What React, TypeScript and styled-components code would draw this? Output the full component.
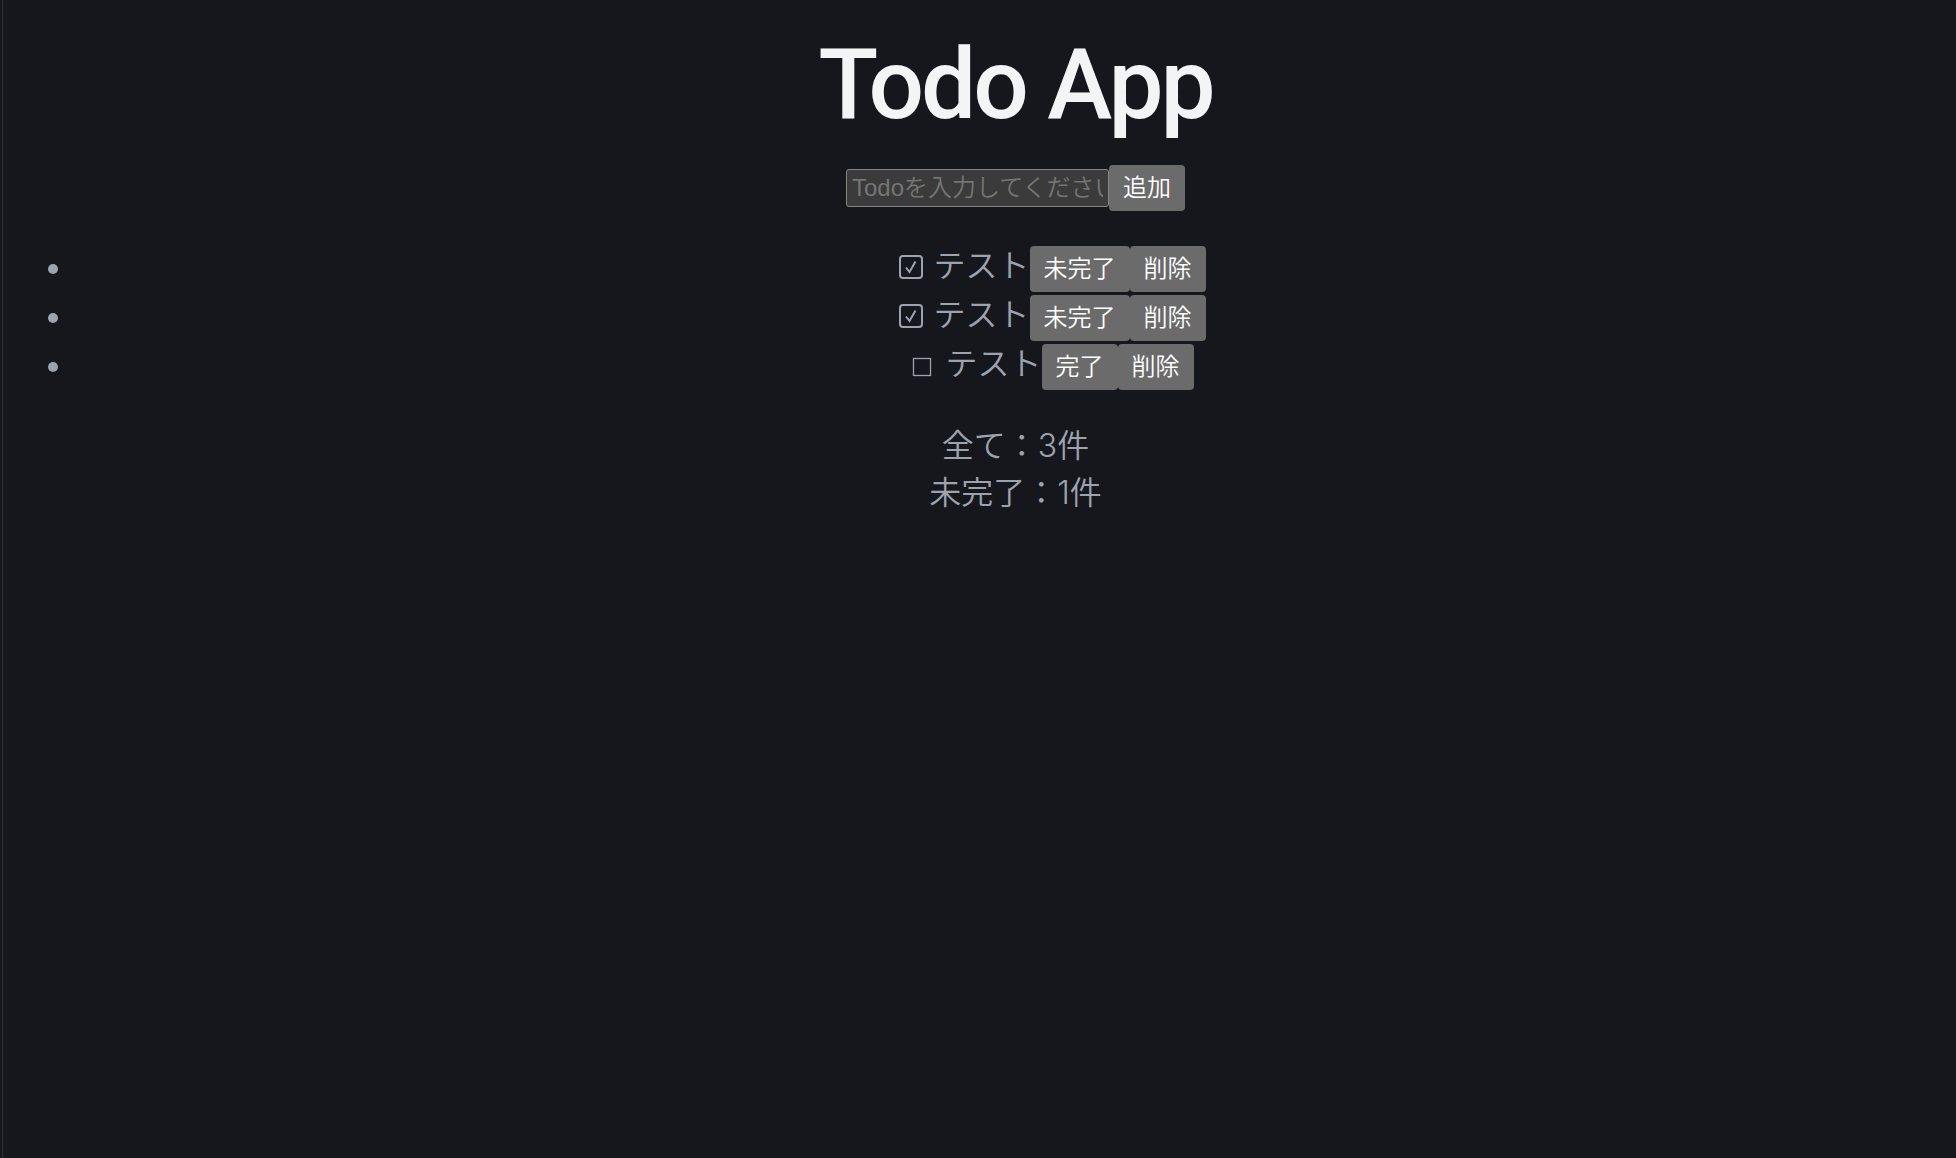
import { FormEvent, useState } from 'react';
import styled, { createGlobalStyle } from 'styled-components';

type Todo = {
  id: number;
  title: string;
  done: boolean;
};

const GlobalStyle = createGlobalStyle`
  * {
    box-sizing: border-box;
  }

  body {
    margin: 0;
    overflow-x: hidden;
    background: #16171d;
    color: #9ca3af;
    font: 350 32px/47px Inter, "Noto Sans CJK JP", sans-serif;
  }
`;

const Page = styled.main`
  width: calc(100% + 70px);
  min-height: 100vh;
  margin-left: 2px;
  border-left: 1px solid #2e303a;
  text-align: center;
`;

const Title = styled.h1`
  margin: 0;
  padding: 26px 0 22px;
  color: #f3f4f6;
  font-family: Roboto, sans-serif;
  font-size: 98px;
  font-weight: 500;
  line-height: 117px;
  letter-spacing: -3px;
`;

const Form = styled.form`
  display: flex;
  justify-content: center;
  align-items: center;
`;

const TextField = styled.input`
  width: 263px;
  height: 38px;
  padding: 0 5px;
  border: 1px solid #858585;
  border-radius: 3px;
  background: #3b3b3b;
  color: #fff;
  font: 350 24px "Liberation Sans", "Noto Sans CJK JP", sans-serif;

  &::placeholder {
    color: #757575;
    opacity: 1;
  }
`;

const Button = styled.button`
  height: 46px;
  padding: 0 14px;
  border: 0;
  border-radius: 4px;
  background: #6b6b6b;
  color: #fff;
  font: inherit;
  font-size: 24px;
  line-height: 46px;
`;

const List = styled.ul`
  display: grid;
  gap: 1px;
  margin: 34px 0 31px;
  padding: 0 0 0 45px;
  list-style: none;
`;

const Item = styled.li`
  display: flex;
  align-items: center;
  gap: 17px;
  height: 48px;

  &::before {
    content: '';
    width: 10px;
    height: 10px;
    border-radius: 50%;
    background: currentColor;
  }
`;

const Row = styled.div`
  display: flex;
  flex: 1;
  justify-content: center;
  align-items: flex-start;
`;

const CheckLabel = styled.label`
  display: flex;
  align-items: center;
  gap: 8px;
  line-height: 40px;
`;

const HiddenCheck = styled.input`
  position: absolute;
  opacity: 0;
`;

const CheckIcon = styled.svg`
  width: 28px;
  height: 28px;
  fill: none;
  stroke: currentColor;
`;

const Summary = styled.p`
  margin: 0;
`;

const CheckMark = ({ checked }: { checked: boolean }) => (
  <CheckIcon viewBox="0 0 28 28" aria-hidden="true">
    {checked ? (
      <>
        <rect x="3" y="4" width="22" height="22" rx="3" strokeWidth="2" />
        <path d="M9 15.5l3.5 4.5 6-10.5" strokeWidth="2" />
      </>
    ) : (
      <rect x="4.5" y="8.5" width="17" height="17" strokeWidth="1.3" />
    )}
  </CheckIcon>
);

const initialTodos: Todo[] = [
  { id: 1, title: 'テスト', done: true },
  { id: 2, title: 'テスト', done: true },
  { id: 3, title: 'テスト', done: false },
];

export default function App() {
  const [todos, setTodos] = useState(initialTodos);
  const [title, setTitle] = useState('');

  const onSubmit = (event: FormEvent) => {
    event.preventDefault();
    if (!title) {
      return;
    }
    setTodos([...todos, { id: Date.now(), title, done: false }]);
    setTitle('');
  };

  const onToggle = (id: number) => {
    setTodos(todos.map(x => x.id === id ? { ...x, done: !x.done } : x));
  };

  const onDelete = (id: number) => {
    setTodos(todos.filter(x => x.id !== id));
  };

  return (
    <Page>
      <GlobalStyle />
      <Title>Todo App</Title>
      <Form onSubmit={onSubmit}>
        <TextField
          type="text"
          aria-label="Todo"
          placeholder="Todoを入力してください"
          value={title}
          onChange={event => setTitle(event.target.value)}
        />
        <Button type="submit">追加</Button>
      </Form>
      <List>
        {todos.map(todo => (
          <Item key={todo.id}>
            <Row>
              <CheckLabel>
                <HiddenCheck type="checkbox" checked={todo.done} onChange={() => onToggle(todo.id)} />
                <CheckMark checked={todo.done} />
                {todo.title}
              </CheckLabel>
              <Button type="button" onClick={() => onToggle(todo.id)}>
                {todo.done ? '未完了' : '完了'}
              </Button>
              <Button type="button" onClick={() => onDelete(todo.id)}>削除</Button>
            </Row>
          </Item>
        ))}
      </List>
      <Summary>全て：{todos.length}件</Summary>
      <Summary>未完了：{todos.filter(x => !x.done).length}件</Summary>
    </Page>
  );
}
